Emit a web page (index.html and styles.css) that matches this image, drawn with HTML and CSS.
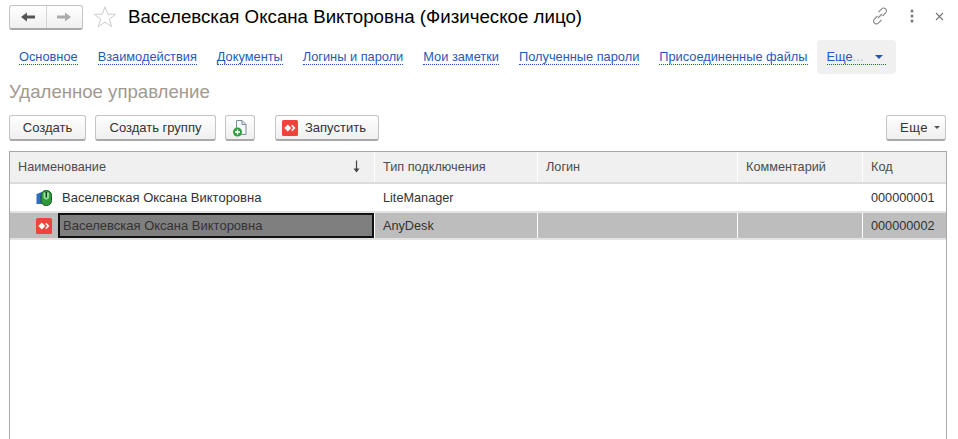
FILE: index.html
```html
<!DOCTYPE html>
<html lang="ru">
<head>
<meta charset="utf-8">
<title>Васелевская Оксана Викторовна</title>
<link rel="stylesheet" href="styles.css">
</head>
<body>
<div class="titlebar">
  <div class="navgroup">
    <button class="navbtn"><svg width="16" height="12" viewBox="0 0 16 12"><path d="M1 6L7 1.500V4.500H15V7.500H7V10.500Z" fill="#555"/></svg></button>
    <button class="navbtn"><svg width="16" height="12" viewBox="0 0 16 12"><path d="M15 6L9 1.500V4.500H1V7.500H9V10.500Z" fill="#aaa"/></svg></button>
  </div>
  <svg class="star" width="24" height="24" viewBox="0 0 26 26"><path d="M13 2L16 10H24.500L17.700 15.200L20.200 23.500L13 18.500L5.800 23.500L8.300 15.200L1.500 10H10Z" fill="#fff" stroke="#c9c9c9"/></svg>
  <h1 class="title">Васелевская Оксана Викторовна (Физическое лицо)</h1>
  <div class="winicons">
    <svg width="18" height="18" viewBox="0 0 18 18"><path d="M7.500 5L10.500 2.200a2.700 2.700 0 0 1 4.300 3.500L11.500 9M10.500 13L7.500 15.800a2.700 2.700 0 0 1-4.300-3.500L6.500 9M7 11L11 7" fill="none" stroke="#8a8a8a" stroke-width="1.100"/></svg>
    <svg width="6" height="14" viewBox="0 0 6 14"><circle cx="3" cy="2" r="1.500" fill="#777"/><circle cx="3" cy="7" r="1.500" fill="#777"/><circle cx="3" cy="12" r="1.500" fill="#777"/></svg>
    <svg width="9" height="9" viewBox="0 0 9 9"><path d="M1 1L8 8M8 1L1 8" stroke="#777" stroke-width="1.100"/></svg>
  </div>
</div>
<nav class="tabs">
  <a class="tab">Основное</a>
  <a class="tab">Взаимодействия</a>
  <a class="tab">Документы</a>
  <a class="tab">Логины и пароли</a>
  <a class="tab">Мои заметки</a>
  <a class="tab">Полученные пароли</a>
  <a class="tab">Присоединенные файлы</a>
  <div class="more"><span class="morelink">Еще<span class="dots">...</span><i class="morearrow"></i></span></div>
</nav>
<h2 class="section">Удаленное управление</h2>
<div class="toolbar">
  <button class="btn btn-create">Создать</button>
  <button class="btn btn-group">Создать группу</button>
  <button class="btn btn-icon"><svg width="16" height="18" viewBox="0 0 16 18"><path d="M4.500 1.500H10L14 5.500V15.500H4.500Z" fill="#f4f7fa" stroke="#7d8b99"/><path d="M10 1.500V5.500H14" fill="none" stroke="#7d8b99"/><circle cx="5.500" cy="13" r="4.500" fill="#2e9f3c"/><path d="M3 13H8M5.500 10.500V15.500" stroke="#fff" stroke-width="1.400"/></svg></button>
  <button class="btn btn-run"><svg class="ad" width="16" height="16" viewBox="0 0 16 16"><rect width="16" height="16" rx="1.500" fill="#ef443b"/><path d="M5.800 4.500L9.300 8L5.800 11.500L2.300 8Z M10.300 4.800L13.500 8L10.300 11.200L9.200 10.100L11.300 8L9.200 5.900Z" fill="#fff"/></svg>Запустить</button>
  <button class="btn btn-more"><span class="more-label">Еще</span><i class="caret"></i></button>
</div>
<div class="table">
  <div class="row head">
    <div class="cell first">Наименование<svg class="sort" width="7" height="13" viewBox="0 0 7 13"><path d="M3.500 0.500V11" stroke="#444" stroke-width="1.200"/><path d="M0.500 8.500H6.500L3.500 12.500Z" fill="#444"/></svg></div>
    <div class="cell">Тип подключения</div>
    <div class="cell">Логин</div>
    <div class="cell">Комментарий</div>
    <div class="cell">Код</div>
  </div>
  <div class="row data">
    <div class="cell first"><svg class="rowicon" width="16" height="16" viewBox="0 0 16 16"><path d="M0.500 4L6 2V14L0.500 14Z" fill="#2d6fc4"/><rect x="5" y="0.500" width="10.500" height="15" rx="5" fill="#2f9a3a" stroke="#17561f"/><path d="M7.500 2.500V8L10.300 10L13 8V2.500" fill="#8fe09a"/><path d="M10.300 2V7.500" stroke="#123a18" stroke-width="1.400"/></svg><span class="name">Васелевская Оксана Викторовна</span></div>
    <div class="cell">LiteManager</div>
    <div class="cell"></div>
    <div class="cell"></div>
    <div class="cell">000000001</div>
  </div>
  <div class="row data selected">
    <div class="cell first"><svg class="rowicon" width="16" height="16" viewBox="0 0 16 16"><rect width="16" height="16" rx="1.500" fill="#ef443b"/><path d="M5.800 4.500L9.300 8L5.800 11.500L2.300 8Z M10.300 4.800L13.500 8L10.300 11.200L9.200 10.100L11.300 8L9.200 5.900Z" fill="#fff"/></svg><span class="name focus">Васелевская Оксана Викторовна</span></div>
    <div class="cell">AnyDesk</div>
    <div class="cell"></div>
    <div class="cell"></div>
    <div class="cell">000000002</div>
  </div>
</div>
</body>
</html>
```
FILE: styles.css
```css
* { box-sizing: border-box; }
html, body { margin: 0; height: 439px; overflow: hidden; background: #fff; }
body { font-family: "Liberation Sans", Arial, sans-serif; font-size: 13px; color: #333; display: flex; flex-direction: column; padding-left: 9px; }

.titlebar { display: flex; align-items: center; height: 30px; margin-top: 2px; }
.navgroup { display: flex; width: 74px; height: 25px; border: 1px solid #c4c4c4; border-bottom: 2px solid #a8a8a8; border-radius: 3px; background: linear-gradient(#fff, #f0f0f0); }
.navbtn { flex: 1; border: 0; background: none; padding: 0; display: flex; align-items: center; justify-content: center; }
.navbtn + .navbtn { border-left: 1px solid #d6d6d6; }
.star { margin-left: 10px; }
.title { margin: 0 0 0 11px; font-size: 18.7px; font-weight: 400; color: #000; white-space: nowrap; }
.winicons { margin: 0 14px 2px auto; width: 73px; display: flex; align-items: center; justify-content: space-between; }

.tabs { display: flex; align-items: flex-start; height: 35px; margin-top: 8px; padding-left: 10px; font-size: 12.8px; }
.tab { margin-top: 10px; margin-right: 20px; line-height: 14px; color: #1f5abb; border-bottom: 1px dotted #1f5abb; white-space: nowrap; }
.more { width: 79px; height: 34px; margin-left: -11px; background: #f0f0f0; border-radius: 4px; padding: 10px 0 0 10px; }
.morelink { display: flex; width: 59px; line-height: 14px; color: #1f5abb; border-bottom: 1px dotted #1f5abb; }
.dots { color: #9fb4d6; }
.morearrow { margin: 5px 3px 0 auto; border: 4px solid transparent; border-top: 4px solid #2255b0; border-bottom: 0; }

.section { margin: 6px 0 0; height: 25px; font-size: 18.6px; font-weight: 400; line-height: 22px; color: #a09a90; }

.toolbar { display: flex; height: 26px; margin-top: 9px; width: 937px; }
.btn { height: 26px; padding: 0; font: inherit; color: #333; background: linear-gradient(#fff, #efefef); border: 1px solid #c4c4c4; border-bottom: 2px solid #a8a8a8; border-radius: 3px; display: flex; align-items: center; justify-content: center; white-space: nowrap; }
.btn-create { width: 77px; }
.btn-group { width: 121px; margin-left: 9px; }
.btn-icon { width: 30px; margin-left: 9px; }
.btn-run { width: 104px; margin-left: 20px; justify-content: flex-start; padding-left: 6px; }
.ad { margin-right: 7px; }
.btn-more { width: 60px; margin-left: auto; justify-content: flex-end; padding-right: 5px; }
.more-label { letter-spacing: 0.5px; }
.caret { margin-left: 6px; border: 3px solid transparent; border-top: 3px solid #555; border-bottom: 0; }

.table { margin-top: 10px; width: 938px; flex: 1; border: 1px solid #a8a8a8; border-bottom: 0; }
.row { display: grid; grid-template-columns: 364px 163px 200px 125px 1fr; border-bottom: 2px solid #e3e3e3; font-size: 12.7px; }
.cell { padding-left: 8px; border-left: 1px solid #fff; white-space: nowrap; color: #333; display: flex; align-items: center; min-width: 0; }
.first { border-left: 0; }
.head { height: 32px; border-bottom-color: #dcdcdc; }
.head .cell { background: #f0f0f0; color: #4c4c4c; padding-bottom: 1px; }
.sort { margin-left: auto; margin-right: 14px; }
.data { height: 29px; }
.data .first { padding-left: 26px; }
.rowicon { flex: none; }
.name { margin-left: 10px; font-size: 13px; }
.selected { height: 27px; }
.selected .cell { background: #bdbdbd; padding-top: 1px; }
.selected .first { padding-top: 0; }
.name.focus { margin-left: 6px; padding: 0 0 0 3px; flex: 1; align-self: stretch; display: flex; align-items: center; background: #7f7f7f; border: 2px solid #111; color: #333; }
```
